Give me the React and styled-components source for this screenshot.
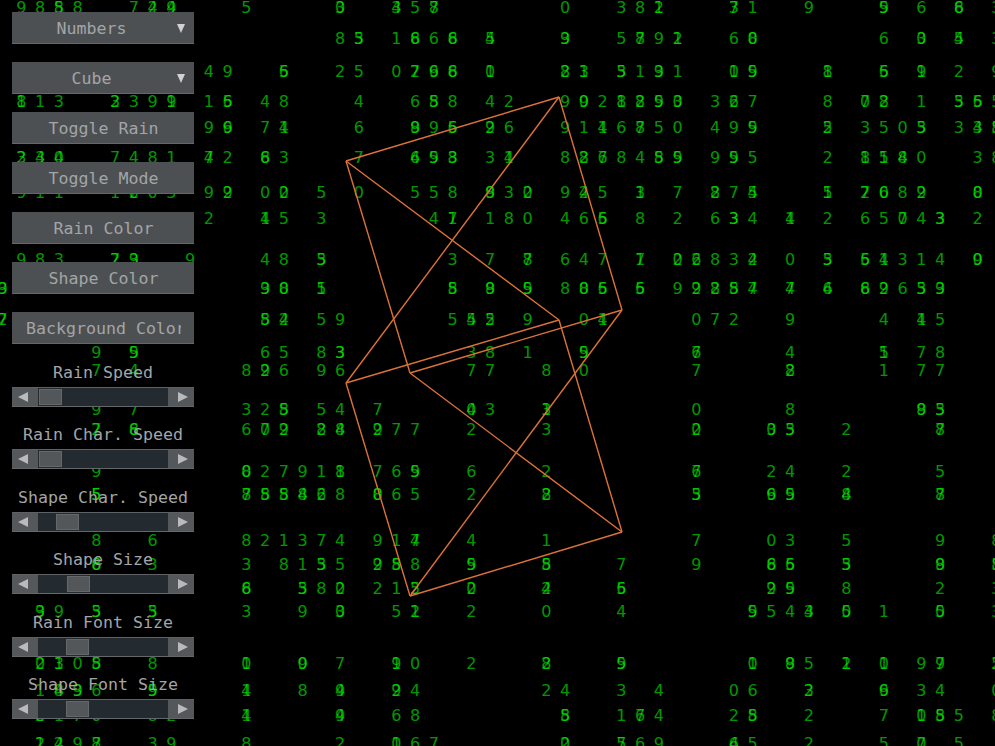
import React from 'react';
import styled, { createGlobalStyle } from 'styled-components';

const GlobalStyle = createGlobalStyle`
  html, body {
    margin: 0;
    height: 100%;
    background: #000;
  }
`;

const Page = styled.div`
  position: relative;
  width: 995px;
  height: 746px;
  overflow: hidden;
  background: #000;
`;

const Canvas = styled.svg`
  position: absolute;
  inset: 0;
`;

const RainDigit = styled.text`
  font-family: "DejaVu Sans", sans-serif;
  font-size: 16px;
  fill: #00ff00;
  fill-opacity: 0.6;
  text-anchor: middle;
`;

const Edge = styled.line`
  stroke: #dc7238;
  stroke-width: 1.4;
`;

const Panel = styled.div`
  position: relative;
  width: 182px;
  padding: 12px 0 0 12px;
  display: flex;
  flex-direction: column;
  font-family: "DejaVu Sans Mono", monospace;
  font-size: 16.6px;
  color: #a3a5a7;
`;

const ButtonList = styled.div`
  display: flex;
  flex-direction: column;
  gap: 18px;
`;

const Button = styled.div`
  box-sizing: border-box;
  height: 32px;
  padding: 0 13px 0 14px;
  display: flex;
  align-items: center;
  background: #4d5053;
  border-bottom: 1px solid #65686b;
`;

const ButtonText = styled.span`
  flex: 1;
  min-width: 0;
  padding-top: 2px;
  padding-right: ${(p) => (p.$combo ? '20px' : '0')};
  overflow: hidden;
  white-space: nowrap;
  text-align: center;
`;

const Caret = styled.span`
  width: 0;
  height: 0;
  margin: 1px -4px 0 0;
  border-left: 4.5px solid transparent;
  border-right: 4.5px solid transparent;
  border-top: 9px solid #d0d1d2;
`;

const SliderGroup = styled.div`
  box-sizing: border-box;
  height: 62.5px;
  display: flex;
  flex-direction: column;
  justify-content: flex-end;
`;

const SliderLabel = styled.div`
  height: 20px;
  line-height: 20px;
  margin-bottom: 4px;
  text-align: center;
  white-space: nowrap;
`;

const Slider = styled.div`
  box-sizing: border-box;
  height: 20px;
  display: flex;
  align-items: stretch;
  background: #55585b;
  border-top: 1px solid #5f6265;
  border-bottom: 1px solid #65686b;
`;

const Arrow = styled.div`
  box-sizing: border-box;
  width: 26px;
  display: flex;
  align-items: center;
  justify-content: center;
  ${(p) => (p.$right ? 'padding-left: 4px;' : 'padding-right: 4px;')}
`;

const ArrowShape = styled.span`
  width: 0;
  height: 0;
  border-top: 5px solid transparent;
  border-bottom: 5px solid transparent;
  ${(p) => (p.$right ? 'border-left: 10px solid #b8babb;' : 'border-right: 10px solid #b8babb;')}
`;

const Track = styled.div`
  flex: 1;
  padding: 1px;
  display: flex;
  background: #232a30;
`;

const Thumb = styled.div`
  box-sizing: border-box;
  width: 23px;
  margin-left: ${(p) => p.$offset}px;
  background: #54575a;
  border: 1px solid #65686b;
`;

const buttons = ['Toggle Rain', 'Toggle Mode', 'Rain Color', 'Shape Color', 'Background Color'];

const sliders = [
  ['Rain Speed', 0],
  ['Rain Char. Speed', 0],
  ['Shape Char. Speed', 17],
  ['Shape Size', 28],
  ['Rain Font Size', 27],
  ['Shape Font Size', 27],
];

// row y, then "column:digits", two digits are drawn on top of each other
const rain = [
  [13, '1:9 2:8 3:58 4:8 7:7 8:24 9:49 13:5 18:03 21:43 22:5 23:87 30:0 33:3 34:8 35:21 39:37 40:1 43:9 47:59 49:6 51:68 53:3'],
  [44, '18:8 19:53 21:1 22:68 23:6 24:68 26:54 30:93 33:5 34:78 35:9 36:12 39:6 40:08 47:6 49:03 51:54 53:3'],
  [77, '11:4 12:9 15:65 18:2 19:5 21:0 22:27 23:69 24:68 26:01 30:82 31:31 33:53 34:1 35:93 36:1 39:10 40:95 44:81 47:65 49:91 51:2 53:9'],
  [107, '1:81 2:1 3:3 6:23 7:3 8:9 9:91 11:1 12:56 14:4 15:8 19:4 22:6 23:58 24:8 26:4 27:2 30:9 31:90 32:2 33:18 34:28 35:59 36:03 38:3 39:26 40:7 44:8 46:70 47:28 49:1 51:53 52:56 53:5'],
  [133, '11:9 12:96 14:7 15:14 19:6 22:89 23:9 24:56 26:29 27:6 30:9 31:1 32:14 33:6 34:78 35:5 36:0 38:4 39:9 40:59 44:25 46:3 47:5 48:0 49:53 51:3 52:43 53:85'],
  [163, '1:32 2:34 3:04 6:7 7:4 8:8 9:1 11:74 12:2 14:86 15:3 19:7 22:46 23:59 24:83 26:3 27:14 30:8 31:82 32:76 33:8 34:4 35:58 36:95 38:9 39:59 40:5 44:2 46:81 47:51 48:48 49:0 52:3 53:8'],
  [198, '1:9 2:1 3:1 6:1 7:20 8:0 9:3 11:9 12:92 14:0 15:02 17:5 19:0 22:5 23:5 24:8 26:89 27:3 28:20 30:9 31:24 32:5 34:13 36:7 38:82 39:7 40:54 44:51 46:72 47:60 48:8 49:29 52:80'],
  [224, '11:2 14:41 15:5 17:3 23:4 24:71 26:1 27:8 28:0 30:4 31:6 32:56 34:8 36:2 38:6 39:33 40:4 42:41 44:2 46:6 47:5 48:70 49:4 50:33 52:2'],
  [265, '1:9 2:8 3:3 6:72 7:39 10:9 14:4 15:8 17:53 24:3 26:7 28:87 30:6 31:4 32:7 34:71 36:20 37:26 38:8 39:3 40:42 42:0 44:53 46:56 47:41 48:3 49:1 50:4 52:90'],
  [294, '0:93 14:93 15:08 17:51 24:58 26:89 28:95 30:8 31:08 32:56 34:65 36:9 37:92 38:82 39:85 40:74 42:47 44:46 46:68 47:92 48:6 49:35 50:93'],
  [325, '0:27 14:85 15:24 17:5 18:9 24:5 25:54 26:52 28:9 31:0 32:41 37:0 38:7 39:2 42:9 47:4 49:41 50:5'],
  [358, '5:9 7:95 14:6 15:5 17:8 18:33 25:3 26:8 28:1 31:95 37:76 42:4 47:51 49:7 50:8'],
  [376, '5:7 7:4 13:8 14:92 15:6 17:9 18:6 25:7 26:7 29:8 31:0 37:7 42:82 47:1 49:7 50:7'],
  [415, '5:9 7:7 13:3 14:2 15:58 17:5 18:4 20:7 25:04 26:3 29:31 37:0 42:8 49:89 50:53'],
  [435, '5:72 7:86 13:6 14:70 15:92 17:28 18:48 20:29 21:7 22:7 25:2 29:3 37:02 41:03 42:53 45:2 50:87'],
  [477, '5:9 13:80 14:2 15:7 16:9 17:1 18:81 20:7 21:6 22:59 25:6 29:2 37:76 41:2 42:4 45:2 50:5'],
  [500, '5:55 13:87 14:85 15:85 16:84 17:26 18:8 20:08 21:6 22:5 25:2 29:28 37:53 41:69 42:95 45:84 50:87'],
  [546, '5:8 8:6 13:8 14:2 15:1 16:3 17:7 18:4 20:9 21:1 22:74 25:4 29:1 37:7 41:0 42:3 45:5 50:9 53:8'],
  [570, '5:68 8:3 13:3 15:8 16:1 17:53 18:5 20:92 21:85 22:8 25:59 29:85 33:7 37:9 41:86 42:65 45:53 50:89 53:85'],
  [594, '13:86 16:53 17:8 18:20 20:2 21:1 22:52 25:20 29:24 33:56 41:29 42:59 45:8 50:2 53:3'],
  [617, '2:93 3:9 5:35 8:53 13:3 16:9 18:03 21:5 22:12 25:2 29:0 33:4 40:95 41:5 42:4 43:34 45:05 47:1 50:05 53:3'],
  [669, '2:20 3:13 4:0 5:85 8:8 13:01 16:90 18:7 21:91 22:0 25:2 29:82 33:95 40:01 42:89 43:5 45:12 47:10 49:9 50:97 53:52'],
  [696, '2:1 3:48 4:93 5:6 8:95 13:41 16:8 18:49 21:29 22:4 29:2 30:4 33:3 35:4 39:0 40:6 43:23 47:69 49:3 50:4 53:0'],
  [721, '2:28 3:1 4:7 5:0 8:8 9:2 13:41 18:49 21:6 22:8 30:58 33:1 34:76 35:4 39:2 40:58 43:2 47:7 49:01 50:85 51:5 53:8'],
  [749, '2:12 3:24 4:9 5:87 8:3 9:9 13:8 18:2 21:10 22:6 23:7 30:02 33:57 34:6 35:9 39:46 40:5 43:2 47:5 49:70 51:5'],
];

const columnX = (col) => 2.5 + 18.75 * col;

const vertices = {
  a: [559, 97],
  b: [346, 161],
  c: [622, 310],
  d: [410, 373],
  e: [559, 320],
  f: [346, 383],
  g: [622, 532],
  h: [410, 596],
};

const edges = ['ab', 'bd', 'dc', 'ca', 'ef', 'fh', 'hg', 'ge', 'be', 'af', 'ch', 'dg'];

const Rain = () =>
  rain.flatMap(([y, row]) =>
    row.split(' ').flatMap((cell) => {
      const [col, digits] = cell.split(':');
      return digits.split('').map((digit, i) => (
        <RainDigit key={`${y}-${col}-${i}`} x={columnX(Number(col))} y={y + 0.4}>
          {digit}
        </RainDigit>
      ));
    })
  );

const App = () => (
  <Page>
    <GlobalStyle />
    <Canvas width="995" height="746" viewBox="0 0 995 746">
      <Rain />
      {edges.map((edge) => {
        const [x1, y1] = vertices[edge[0]];
        const [x2, y2] = vertices[edge[1]];
        return <Edge key={edge} x1={x1} y1={y1} x2={x2} y2={y2} />;
      })}
    </Canvas>
    <Panel>
      <ButtonList>
        <Button>
          <ButtonText $combo>Numbers</ButtonText>
          <Caret />
        </Button>
        <Button>
          <ButtonText $combo>Cube</ButtonText>
          <Caret />
        </Button>
        {buttons.map((label) => (
          <Button key={label}>
            <ButtonText>{label}</ButtonText>
          </Button>
        ))}
      </ButtonList>
      {sliders.map(([label, offset]) => (
        <SliderGroup key={label}>
          <SliderLabel>{label}</SliderLabel>
          <Slider>
            <Arrow>
              <ArrowShape />
            </Arrow>
            <Track>
              <Thumb $offset={offset} />
            </Track>
            <Arrow $right>
              <ArrowShape $right />
            </Arrow>
          </Slider>
        </SliderGroup>
      ))}
    </Panel>
  </Page>
);

export default App;
